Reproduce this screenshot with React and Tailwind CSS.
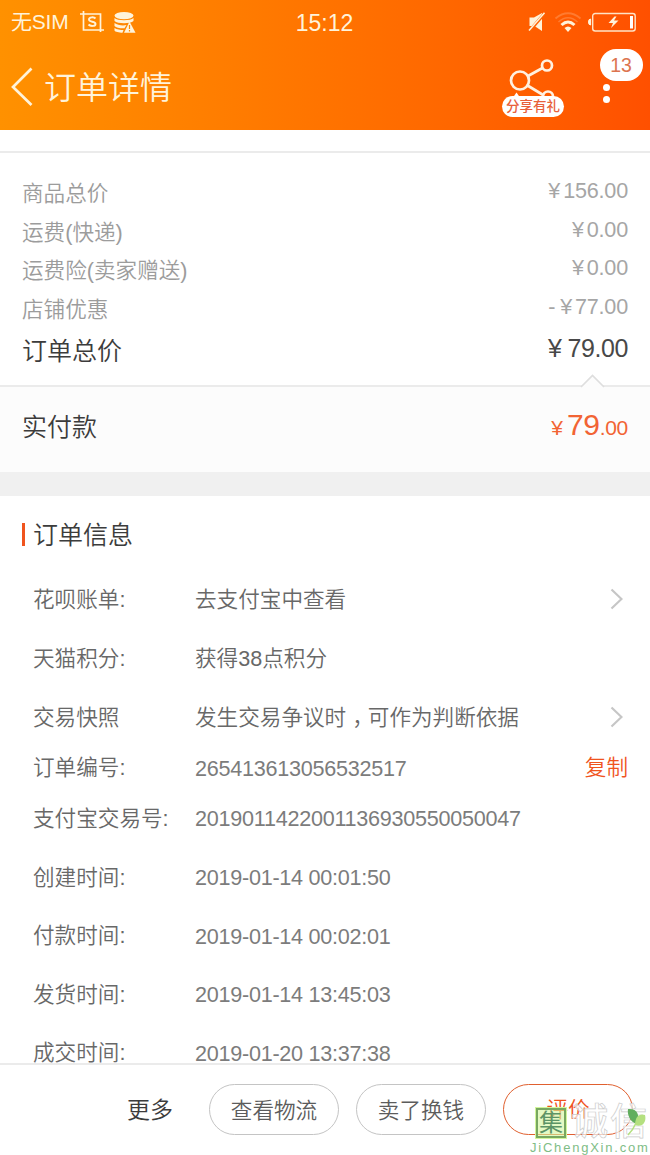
import clsx from 'clsx'

const prices = [
	{ label: '商品总价', value: '156.00' },
	{ label: '运费(快递)', value: '0.00' },
	{ label: '运费险(卖家赠送)', value: '0.00' },
	{ label: '店铺优惠', value: '77.00', minus: true },
]

const infos = [
	{ label: '花呗账单:', value: '去支付宝中查看', arrow: true, h: 'h-[59px]' },
	{ label: '天猫积分:', value: '获得38点积分', h: 'h-[59px]' },
	{
		label: '交易快照',
		value: <>发生交易争议时<span className="pl-[6px] tracking-[-6px]">，</span>可作为判断依据</>,
		arrow: true,
		h: 'h-[59px]',
	},
	{ label: '订单编号:', value: '265413613056532517', num: true, copy: true, h: 'h-[42px]' },
	{ label: '支付宝交易号:', value: '2019011422001136930550050047', num: true, h: 'h-[59px]' },
	{ label: '创建时间:', value: '2019-01-14 00:01:50', num: true, h: 'h-[59px]' },
	{ label: '付款时间:', value: '2019-01-14 00:02:01', num: true, h: 'h-[58px]' },
	{ label: '发货时间:', value: '2019-01-14 13:45:03', num: true, h: 'h-[59px]' },
	{ label: '成交时间:', value: '2019-01-20 13:37:38', num: true, h: 'h-[58px]' },
]

function StatusBar() {
	return (
		<div className="grid h-11 grid-cols-3 items-center pl-[11px] pr-[14px] text-[#fff3da]">
			<div className="flex items-center">
				<span className="text-[21px] font-normal tracking-[-0.2px]">无SIM</span>
				<svg className="ml-[11px] shrink-0" width="24" height="22" viewBox="0 0 24 22" fill="none" stroke="currentColor" strokeWidth="1.7">
					<path d="M0 3h20.500v18M3.500 0v19H24" />
					<path d="M15.500 7.500C14 5.800 9 5.800 9 8.500c0 3 6.500 1.400 6.500 4.400 0 2.700-5.300 2.500-7 .6" strokeWidth="1.900" />
				</svg>
				<svg className="ml-2.5 shrink-0" width="22" height="21" viewBox="0 0 22 21" fill="currentColor">
					<ellipse cx="10" cy="3.600" rx="9.500" ry="3.600" />
					<path d="M.5 6c3 3 16 3 19 0v3c-3 3-16 3-19 0zM.5 11c3 2.500 9 2.800 12 2l-2 3.300C6 16.500 2 15.500.5 14zM.5 16c2 1.500 6 2 9 2l-1 2.700C5 20.700 1 19.800.5 18.500z" />
					<path d="M15.500 9.500 21.500 20.700H10z" />
					<path d="M15.500 13v4M15.500 18v1.500" stroke="#ff8a00" strokeWidth="1.200" />
				</svg>
			</div>
			<div className="pl-0.5 pt-px text-center text-[23px] leading-[42px]">15:12</div>
			<div className="flex items-center justify-end">
				<svg width="18" height="20" viewBox="0 0 18 20">
					<path d="M1.500 5.500H6L14 1v18l-7.500-5h-5z" fill="currentColor" />
					<path d="M1.500 19 16.500 1.500" stroke="#ff6200" strokeWidth="3.200" />
					<path d="M1 18.500 16.500.8" stroke="currentColor" strokeWidth="1.500" />
				</svg>
				<svg className="ml-2" width="28" height="22" viewBox="0 0 28 22" fill="none" stroke="currentColor">
					<path d="M1.500 7.500Q14-3 26.500 7.500" strokeWidth="1.800" opacity=".22" />
					<path d="M4.500 11Q14 2.500 23.500 11" strokeWidth="1.500" opacity=".22" />
					<path d="M7.500 14Q14 8 20.500 14" strokeWidth="3" />
					<path d="M10.500 17q3.500-3 7 0L14 21z" fill="currentColor" stroke="none" />
				</svg>
				<svg className="ml-1.5" width="48" height="20" viewBox="0 0 48 20" fill="none">
					<rect x="4.700" y="1.500" width="42.500" height="17.500" rx="2.500" stroke="currentColor" strokeWidth="1.400" opacity=".9" />
					<path d="M2.600 7Q.5 7 .5 10t2.100 3z" fill="currentColor" stroke="currentColor" />
					<path d="M26.500 4.500 20.500 11h4.500l-2 5 7.500-7.500H26l2.500-4z" fill="currentColor" />
					<path d="M43.500 4v12.500" stroke="#fff" strokeWidth="3" />
				</svg>
			</div>
		</div>
	)
}

function Header() {
	return (
		<header className="h-[130px] bg-linear-to-r from-[#ff9100] to-[#ff5000]">
			<StatusBar />
			<div className="flex h-[86px] items-center">
				<svg className="ml-[11px]" width="22" height="40" viewBox="0 0 22 40" fill="none" stroke="#fff3da" strokeWidth="2.700">
					<path d="M20.500 1.500 2 20 20.500 38" />
				</svg>
				<h1 className="ml-[11px] mt-px text-[32px] font-[350] leading-none text-[#fff3da]">订单详情</h1>
				{/* 分享 */}
				<div className="relative ml-auto h-[62px] w-[62px]">
					<svg width="62" height="62" viewBox="0 0 62 62" fill="none" stroke="#fff1e0" strokeWidth="2.700">
						<circle cx="18" cy="24.500" r="9" />
						<circle cx="45" cy="9.500" r="5" />
						<circle cx="46" cy="40.500" r="5" />
						<path d="M26 20 40.500 12M25.500 29.500 42 39.500" />
						<path d="M10 43l4.500-6.500L19 43z" fill="#fff" stroke="none" />
					</svg>
					<div className="absolute bottom-px left-0 flex h-[21px] w-[62px] items-center justify-center rounded-full bg-white text-[13.5px] font-medium leading-none text-[#e8603a]">分享有礼</div>
				</div>
				<div className="relative ml-[35px] h-[62px] w-[51px]">
					<div className="absolute left-[4px] top-[28px] size-[7px] rounded-full bg-white" />
					<div className="absolute left-[4px] top-[39.500px] size-[7px] rounded-full bg-white" />
					<div className="absolute -top-[7px] left-[0.500px] flex h-[32px] w-[43px] items-center justify-center rounded-full bg-white pt-0.5 text-[19.500px] text-[#dc7450]">13</div>
				</div>
			</div>
		</header>
	)
}

function InfoRow({ item }) {
	return (
		<div className={clsx('flex items-center pl-[33px] pr-[22px] text-[21.6px] leading-[30px] text-[#686868]', item.h)}>
			<span className="w-[162px] shrink-0">{item.label}</span>
			<span className={clsx('mt-px whitespace-nowrap', item.num && 'tracking-[-0.26px] text-[#7c7c7c]')}>{item.value}</span>
			{item.arrow && (
				<svg className="-mt-0.5 ml-auto mr-[5px] shrink-0" width="13" height="22" viewBox="0 0 13 22" fill="none" stroke="#c6c6c6" strokeWidth="2.200">
					<path d="M1.500 1.500 11.500 11 1.500 20.500" />
				</svg>
			)}
			{item.copy && <span className="ml-auto text-[#f0541e]">复制</span>}
		</div>
	)
}

function Watermark() {
	return (
		<div className="absolute bottom-0 right-0 h-[52px] w-[121px]">
			<div className="absolute left-[7px] top-[5px] flex size-[30px] items-center justify-center border-2 border-[#78a860] bg-[#d2f59c]/60 text-[24px] font-normal leading-none text-[#5d9466] ring-1 ring-[#d2f59c]">集</div>
			<div className="absolute left-[42px] top-px whitespace-nowrap text-[37px] font-medium leading-[38px] tracking-[2px] text-white/70 [-webkit-text-stroke:0.7px_#cccccc]">诚信</div>
			<svg className="absolute left-[98px] top-[5px]" width="20" height="28" viewBox="0 0 20 28">
				<path d="M1 1c10-1 12 7 9 15C3 14 0 7 1 1z" fill="#62ae5e" />
				<path d="M8 17c0-9 5-12 10-10 2 7-3 13-10 10z" fill="#b4e080" />
				<path d="M9 15Q6 22 1 27" stroke="#b4e080" strokeWidth="1.500" fill="none" />
			</svg>
			<div className="absolute bottom-0 left-[1px] whitespace-nowrap text-[13px] leading-[14px] tracking-[1.780px] text-[#80bd86]">JiChengXin.com</div>
		</div>
	)
}

export default function App() {
	return (
		<div className="relative flex h-[1155px] w-[650px] flex-col overflow-hidden bg-white font-['Liberation_Sans','Noto_Sans_CJK_SC',sans-serif] font-[350]">
			<Header />
			<div className="h-[23px] shrink-0 border-b-2 border-[#ebebeb]" />

			{/* 价格明细 */}
			<section className="h-[232px] shrink-0 pt-[20px]">
				{prices.map(p => (
					<div key={p.label} className="flex h-[38.700px] items-center justify-between px-[22px] text-[21.6px] leading-[30px] text-[#9c9c9c]">
						<span className="mt-[3px]">{p.label}</span>
						<span className="-mt-[3px] tracking-[-0.2px] text-[#a6a6a6]">
							{p.minus && <span className="mr-[5px]">-</span>}
							<span className="mr-[3px]">¥</span>
							{p.value}
						</span>
					</div>
				))}
				<div className="flex h-[44px] items-center justify-between px-[22px] text-[25px] leading-[34px] text-[#3c3c3c]">
					<span className="mt-0.5">订单总价</span>
					<span className="-mt-[3px] tracking-[-0.4px] text-[#484848]"><span className="mr-[6px]">¥</span>79.00</span>
				</div>
			</section>
			<section className="relative flex h-[87px] shrink-0 items-center justify-between border-t-2 border-[#ebebeb] bg-[#fcfcfc] px-[22px] pb-1.5">
				<svg className="absolute -top-[13px] left-[580px]" width="26" height="14" viewBox="0 0 26 14">
					<path d="M1 13 12.500 1.500 24 13" fill="#fcfcfc" stroke="#dedede" strokeWidth="1.700" />
				</svg>
				<span className="text-[25px] leading-[34px] text-[#3c3c3c]">实付款</span>
				<span className="flex items-baseline leading-[34px] text-[#f26434]">
					<span className="mr-[4px] text-[21px]">¥</span>
					<span className="text-[30px] tracking-[-0.3px]">79</span>
					<span className="text-[21px] tracking-[-0.3px]">.00</span>
				</span>
			</section>
			<div className="h-6 shrink-0 bg-[#f0f0f0]" />

			{/* 订单信息 */}
			<section className="min-h-0 flex-1 overflow-hidden">
				<div className="flex h-[74px] items-center pl-[22px] pt-[3px]">
					<i className="h-[23px] w-[3px] bg-[#f0541e]" />
					<h2 className="ml-2 text-[25px] font-[350] leading-[34px] text-[#3c3c3c]">订单信息</h2>
				</div>
				{infos.map(item => <InfoRow key={item.label} item={item} />)}
			</section>

			<footer className="flex h-[92px] shrink-0 items-center border-t-2 border-[#ebebeb] bg-white pb-0.5 pr-[17px] text-[21.6px] text-[#5c5c5c]">
				<span className="ml-[127px] mr-auto pt-[3px] text-[23px] text-[#3c3c3c]">更多</span>
				<div className="flex gap-[17px]">
					<button className="h-[51px] w-[130px] rounded-full border border-[#c4c4c4] pt-[4px]">查看物流</button>
					<button className="h-[51px] w-[130px] rounded-full border border-[#c4c4c4] pt-[4px]">卖了换钱</button>
					<button className="h-[51px] w-[130px] rounded-full border border-[#e0602f] pt-[3px] text-[#f0541e]">评价</button>
				</div>
			</footer>
			<Watermark />
		</div>
	)
}
